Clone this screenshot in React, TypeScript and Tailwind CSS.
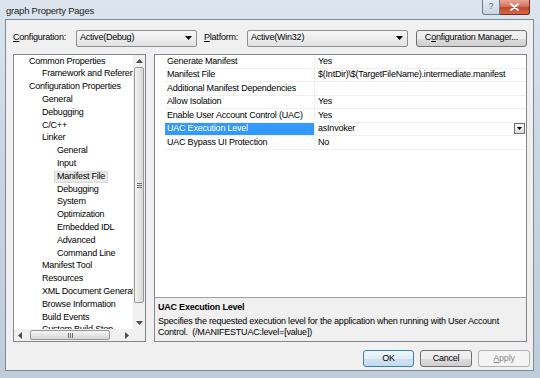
import React from "react";

const font = "font-['Liberation_Sans',Arial,sans-serif] text-[9px] tracking-[-0.22px] text-black";

const indent = ["pl-[15px]", "pl-[28px]", "pl-[40px]"];

const treeItems: [string, number][] = [
  ["Common Properties", 0],
  ["Framework and References", 1],
  ["Configuration Properties", 0],
  ["General", 1],
  ["Debugging", 1],
  ["C/C++", 1],
  ["Linker", 1],
  ["General", 2],
  ["Input", 2],
  ["Manifest File", 2],
  ["Debugging", 2],
  ["System", 2],
  ["Optimization", 2],
  ["Embedded IDL", 2],
  ["Advanced", 2],
  ["Command Line", 2],
  ["Manifest Tool", 1],
  ["Resources", 1],
  ["XML Document Generator", 1],
  ["Browse Information", 1],
  ["Build Events", 1],
  ["Custom Build Step", 1],
];

const props: [string, string][] = [
  ["Generate Manifest", "Yes"],
  ["Manifest File", "$(IntDir)\\$(TargetFileName).intermediate.manifest"],
  ["Additional Manifest Dependencies", ""],
  ["Allow Isolation", "Yes"],
  ["Enable User Account Control (UAC)", "Yes"],
  ["UAC Execution Level", "asInvoker"],
  ["UAC Bypass UI Protection", "No"],
];

const Arrow = ({ dir, color = "#4d4d4d" }: { dir: "up" | "down" | "left" | "right"; color?: string }) => {
  const pts = {
    up: "0,4 3.5,0 7,4",
    down: "0,0 7,0 3.5,4",
    left: "4,0 4,7 0,3.5",
    right: "0,0 0,7 4,3.5",
  }[dir];
  const w = dir === "up" || dir === "down" ? 7 : 4;
  const h = dir === "up" || dir === "down" ? 4 : 7;
  return (
    <svg width={w} height={h} viewBox={`0 0 ${w} ${h}`}>
      <polygon points={pts} fill={color} />
    </svg>
  );
};

const Combo = ({ width, value }: { width: string; value: string }) => (
  <div className={`${width} h-[17px] flex items-center justify-between pl-[3px] pr-[4px] border border-[#8e8f8f] rounded-[2px] bg-[linear-gradient(180deg,#f7f7f7_0%,#ececec_50%,#e2e2e2_100%)]`}>
    <span>{value}</span>
    <svg width="7" height="4" viewBox="0 0 7 4">
      <polygon points="0,0 7,0 3.5,4" fill="#000" />
    </svg>
  </div>
);

const Button = ({ children, width, kind = "normal" }: { children: React.ReactNode; width: string; kind?: "normal" | "default" | "disabled" }) => {
  const style =
    kind === "default"
      ? "border-[#3c7fb1] bg-[linear-gradient(180deg,#eef6fc_0%,#e0ecf6_50%,#cfe2f1_51%,#c4dbee_100%)] text-black"
      : kind === "disabled"
      ? "border-[#adb2b5] bg-[#f4f4f4] text-[#8b8b8b]"
      : "border-[#707070] bg-[linear-gradient(180deg,#f2f2f2_0%,#ebebeb_50%,#dddddd_51%,#cfcfcf_100%)] text-black";
  return (
    <div className={`${width} h-[17px] flex items-center justify-center border rounded-[3px] ${style}`}>
      <span>{children}</span>
    </div>
  );
};

export default function App() {
  return (
    <div className={`w-[540px] h-[378px] flex flex-col bg-[linear-gradient(180deg,#dce5ee_0%,#cad6e2_40%,#bfccd9_100%)] ${font}`}>
      {/* title bar */}
      <div className="h-[19px] flex items-start justify-between pl-[6px] pr-[10px] shrink-0">
        <span className="mt-[4px] text-[9.5px] text-[#1e1e1e]">graph Property Pages</span>
        <div className="flex">
          <div className="w-[18px] h-[15px] flex items-center justify-center border border-[#6f7c8a] border-t-0 rounded-bl-[3px] bg-[linear-gradient(180deg,#e4ebf2_0%,#c9d5e1_100%)] text-[9px] text-[#5a6a7a]">
            ?
          </div>
          <div className="w-[30px] h-[15px] flex items-center justify-center border border-[#6b2a1e] border-t-0 border-l-0 rounded-br-[3px] bg-[linear-gradient(180deg,#e8a593_0%,#d47561_45%,#c2452c_55%,#d76a4c_100%)]">
            <svg width="9" height="8" viewBox="0 0 9 8">
              <path d="M1 1 L8 7 M8 1 L1 7" stroke="#fff" strokeWidth="1.8" strokeLinecap="round" />
            </svg>
          </div>
        </div>
      </div>

      {/* client */}
      <div className="flex-1 ml-[5px] mr-[6px] mb-[7px] border border-[#7d8a97] bg-[#f0f0f0] flex flex-col pt-[9px] pl-[7px] pr-[5px]">
        {/* config row */}
        <div className="h-[18px] flex items-center">
          <span className="w-[63px]">
            <span className="underline">C</span>onfiguration:
          </span>
          <Combo width="w-[121px]" value="Active(Debug)" />
          <span className="ml-[7px] w-[43px]">
            <span className="underline">P</span>latform:
          </span>
          <Combo width="w-[161px]" value="Active(Win32)" />
          <div className="ml-[8px]">
            <Button width="w-[111px]">
              C<span className="underline">o</span>nfiguration Manager...
            </Button>
          </div>
        </div>

        {/* panels */}
        <div className="mt-[7px] h-[288px] flex gap-[8px]">
          {/* tree */}
          <div className="w-[133px] border border-[#828790] bg-white flex flex-col">
            <div className="flex-1 flex min-h-0">
              <div className="flex-1 overflow-hidden flex flex-col">
                {treeItems.map(([label, lvl], i) => (
                  <div key={i} className={`h-[12.8px] shrink-0 flex items-center whitespace-nowrap ${indent[lvl]}`}>
                    {label === "Manifest File" ? (
                      <span className="px-[2px] h-[12px] flex items-center bg-[#e8e8e8] border border-[#dadada]">{label}</span>
                    ) : (
                      <span className={lvl === 2 ? "px-[3px]" : ""}>{label}</span>
                    )}
                  </div>
                ))}
              </div>
              {/* vertical scrollbar */}
              <div className="w-[12px] bg-[#f0f0f0] flex flex-col items-center">
                <div className="h-[12px] flex items-center justify-center">
                  <Arrow dir="up" />
                </div>
                <div className="w-[10px] h-[236px] rounded-[2px] border border-[#989898] bg-[linear-gradient(90deg,#f3f3f3_0%,#e6e6e6_50%,#d6d6d6_100%)] flex flex-col items-center justify-center gap-[1px]">
                  <div className="w-[5px] h-px bg-[#6f6f6f]" />
                  <div className="w-[5px] h-px bg-[#6f6f6f]" />
                  <div className="w-[5px] h-px bg-[#6f6f6f]" />
                </div>
                <div className="flex-1" />
                <div className="h-[12px] flex items-center justify-center">
                  <Arrow dir="down" />
                </div>
              </div>
            </div>
            {/* horizontal scrollbar */}
            <div className="h-[12px] flex shrink-0">
              <div className="flex-1 bg-[#f0f0f0] flex items-center">
                <div className="w-[12px] flex items-center justify-center">
                  <Arrow dir="left" />
                </div>
                <div className="ml-[4px] w-[80px] h-[10px] rounded-[2px] border border-[#989898] bg-[linear-gradient(180deg,#f3f3f3_0%,#e6e6e6_50%,#d6d6d6_100%)] flex items-center justify-center gap-[1px]">
                  <div className="w-px h-[5px] bg-[#6f6f6f]" />
                  <div className="w-px h-[5px] bg-[#6f6f6f]" />
                  <div className="w-px h-[5px] bg-[#6f6f6f]" />
                </div>
                <div className="flex-1" />
                <div className="w-[12px] flex items-center justify-center">
                  <Arrow dir="right" />
                </div>
              </div>
              <div className="w-[12px] bg-[#f0f0f0]" />
            </div>
          </div>

          {/* property grid */}
          <div className="w-[373px] border border-[#828790] flex flex-col">
            <div className="flex-1 bg-white flex flex-col">
              {props.map(([name, value], i) => {
                const sel = name === "UAC Execution Level";
                return (
                  <div key={i} className="h-[13.5px] flex pl-[10px]">
                    <div className={`w-[149px] flex items-center pl-[2px] border-b border-[#f0f0f0] ${sel ? "bg-[#3399ff] text-white" : ""}`}>
                      <span className="whitespace-nowrap">{name}</span>
                    </div>
                    <div className="flex-1 flex items-center justify-between pl-[3px] pr-[1px] border-b border-l border-[#f0f0f0]">
                      <span className="whitespace-nowrap">{value}</span>
                      {sel && (
                        <div className="w-[11px] h-[11px] border border-[#707070] bg-[linear-gradient(180deg,#f6f6f6_0%,#dedede_100%)] flex items-center justify-center">
                          <svg width="5" height="3" viewBox="0 0 5 3">
                            <polygon points="0,0 5,0 2.5,3" fill="#000" />
                          </svg>
                        </div>
                      )}
                    </div>
                  </div>
                );
              })}
            </div>
            <div className="h-[44px] border-t border-[#a0a0a0] bg-[#f0f0f0] pl-[3px] pt-[4px]">
              <div className="h-[11px] font-bold leading-[11px]">UAC Execution Level</div>
              <div className="mt-[3px] leading-[10.5px] pr-[20px]">
                Specifies the requested execution level for the application when running with User Account Control.&nbsp; (/MANIFESTUAC:level=[value])
              </div>
            </div>
          </div>
        </div>

        {/* buttons */}
        <div className="mt-[8px] -mr-[2px] flex justify-end gap-[6px]">
          <Button width="w-[51px]" kind="default">OK</Button>
          <Button width="w-[52px]">Cancel</Button>
          <Button width="w-[52px]" kind="disabled">
            <span className="underline">A</span>pply
          </Button>
        </div>
      </div>
    </div>
  );
}
